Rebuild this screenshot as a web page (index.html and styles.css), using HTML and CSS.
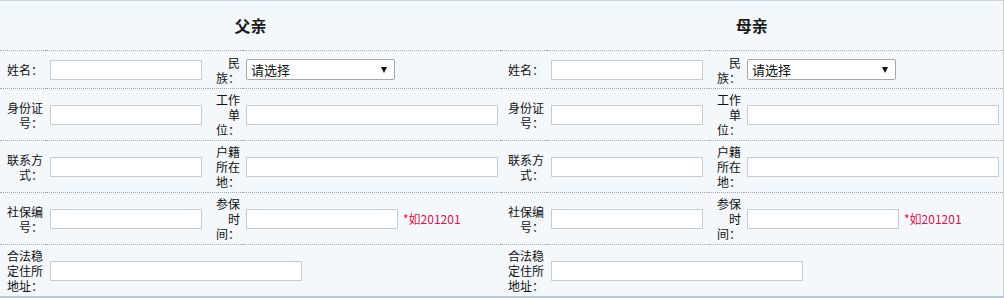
FILE: index.html
```html
<!DOCTYPE html>
<html lang="zh-CN">
<head>
    <meta charset="UTF-8">
    <title>父母信息</title>
<link rel="stylesheet" href="styles.css">
</head>
<body>
<table class="family-table">
    <colgroup>
        <col class="c-label"><col class="c-field"><col class="c-label2"><col class="c-wide">
        <col class="c-label"><col class="c-field"><col class="c-label2"><col class="c-wide-r">
    </colgroup>
    <tr class="head-row">
        <td colspan="4" class="head">父亲</td>
        <td colspan="4" class="head">母亲</td>
    </tr>
    <tr>
        <td class="label">姓名<span class="colon">：</span></td>
        <td class="field"><input type="text" class="txt"></td>
        <td class="label label2">民族<span class="colon">：</span></td>
        <td class="field field2"><span class="sel-wrap"><select class="sel"><option>请选择</option></select></span></td>
        <td class="label">姓名<span class="colon">：</span></td>
        <td class="field"><input type="text" class="txt"></td>
        <td class="label label2">民族<span class="colon">：</span></td>
        <td class="field field2"><span class="sel-wrap"><select class="sel"><option>请选择</option></select></span></td>
    </tr>
    <tr>
        <td class="label">身份证号<span class="colon">：</span></td>
        <td class="field"><input type="text" class="txt"></td>
        <td class="label label2">工作单位<span class="colon">：</span></td>
        <td class="field field2"><input type="text" class="txt txt-long"></td>
        <td class="label">身份证号<span class="colon">：</span></td>
        <td class="field"><input type="text" class="txt"></td>
        <td class="label label2">工作单位<span class="colon">：</span></td>
        <td class="field field2"><input type="text" class="txt txt-long"></td>
    </tr>
    <tr>
        <td class="label">联系方式<span class="colon">：</span></td>
        <td class="field"><input type="text" class="txt"></td>
        <td class="label label2">户籍所在地<span class="colon">：</span></td>
        <td class="field field2"><input type="text" class="txt txt-long"></td>
        <td class="label">联系方式<span class="colon">：</span></td>
        <td class="field"><input type="text" class="txt"></td>
        <td class="label label2">户籍所在地<span class="colon">：</span></td>
        <td class="field field2"><input type="text" class="txt txt-long"></td>
    </tr>
    <tr>
        <td class="label">社保编号<span class="colon">：</span></td>
        <td class="field"><input type="text" class="txt"></td>
        <td class="label label2">参保时间<span class="colon">：</span></td>
        <td class="field field2"><input type="text" class="txt"><span class="hint">*如201201</span></td>
        <td class="label">社保编号<span class="colon">：</span></td>
        <td class="field"><input type="text" class="txt"></td>
        <td class="label label2">参保时间<span class="colon">：</span></td>
        <td class="field field2"><input type="text" class="txt"><span class="hint">*如201201</span></td>
    </tr>
    <tr class="last-row">
        <td class="label">合法稳定住所地址<span class="colon">：</span></td>
        <td class="field" colspan="3"><input type="text" class="txt txt-addr"></td>
        <td class="label">合法稳定住所地址<span class="colon">：</span></td>
        <td class="field" colspan="3"><input type="text" class="txt txt-addr"></td>
    </tr>
</table>
</body>
</html>
```

FILE: styles.css
```css
html,body {
    margin: 0;
    padding: 0;
    background: #fff;
    font-family: "Noto Sans CJK SC", "Liberation Sans", sans-serif;
    font-size: 12px;
    color: #111;
}
.family-table {
    width: 1003px;
    table-layout: fixed;
    border-collapse: collapse;
    background-color: #f4f8fb;
    border-top: 1px solid #c9d5dd;
    border-right: 1px solid #c9d5dd;
    border-bottom: 2px solid #b6cbd2;
}
.c-label { width: 46px; }
.c-field { width: 162px; }
.c-label2 { width: 35px; }
.c-wide { width: 258px; }
.c-wide-r { width: 259px; }

.family-table td {
    height: 31px;
    padding: 3px 0;
    line-height: 15px;
    vertical-align: middle;
    border-bottom: 1px dotted #a6a6a6;
}
.family-table .last-row td {
    border-bottom: none;
}
.family-table td.head {
    height: 43px;
    text-align: center;
    font-size: 16px;
    font-weight: bold;
    color: #1a1a1a;
}
.label {
    text-align: right;
    padding-left: 4px !important;
    padding-right: 3px !important;
}
/* centred full-width colon, as in the old song-style font */
.colon {
    font-family: "Noto Sans CJK TC", "Noto Sans CJK SC", sans-serif;
}
.field {
    padding-left: 4px !important;
    white-space: nowrap;
}
.field2 {
    padding-left: 3px !important;
}
.txt {
    box-sizing: border-box;
    width: 152px;
    height: 20px;
    margin: 0;
    border: 1px solid #c4ccd4;
    background: #fff;
    vertical-align: middle;
}
.txt-long {
    width: 252px;
}
.txt-addr {
    width: 252px;
}
.sel-wrap {
    position: relative;
    display: inline-block;
    vertical-align: middle;
}
.sel-wrap::after {
    content: "";
    position: absolute;
    right: 8px;
    top: 8px;
    border-left: 3px solid transparent;
    border-right: 3px solid transparent;
    border-top: 6px solid #111;
    pointer-events: none;
}
.sel {
    -webkit-appearance: none;
    appearance: none;
    box-sizing: border-box;
    width: 149px;
    height: 21px;
    margin: 0;
    padding: 0 0 0 4px;
    border: 1px solid #a8a8a8;
    border-radius: 2px;
    background: #fff;
    font-family: "Noto Sans CJK SC", "Liberation Sans", sans-serif;
    font-size: 13px;
    color: #111;
    vertical-align: middle;
}
.hint {
    margin-left: 5px;
    color: #e0104a;
    vertical-align: middle;
}
```
